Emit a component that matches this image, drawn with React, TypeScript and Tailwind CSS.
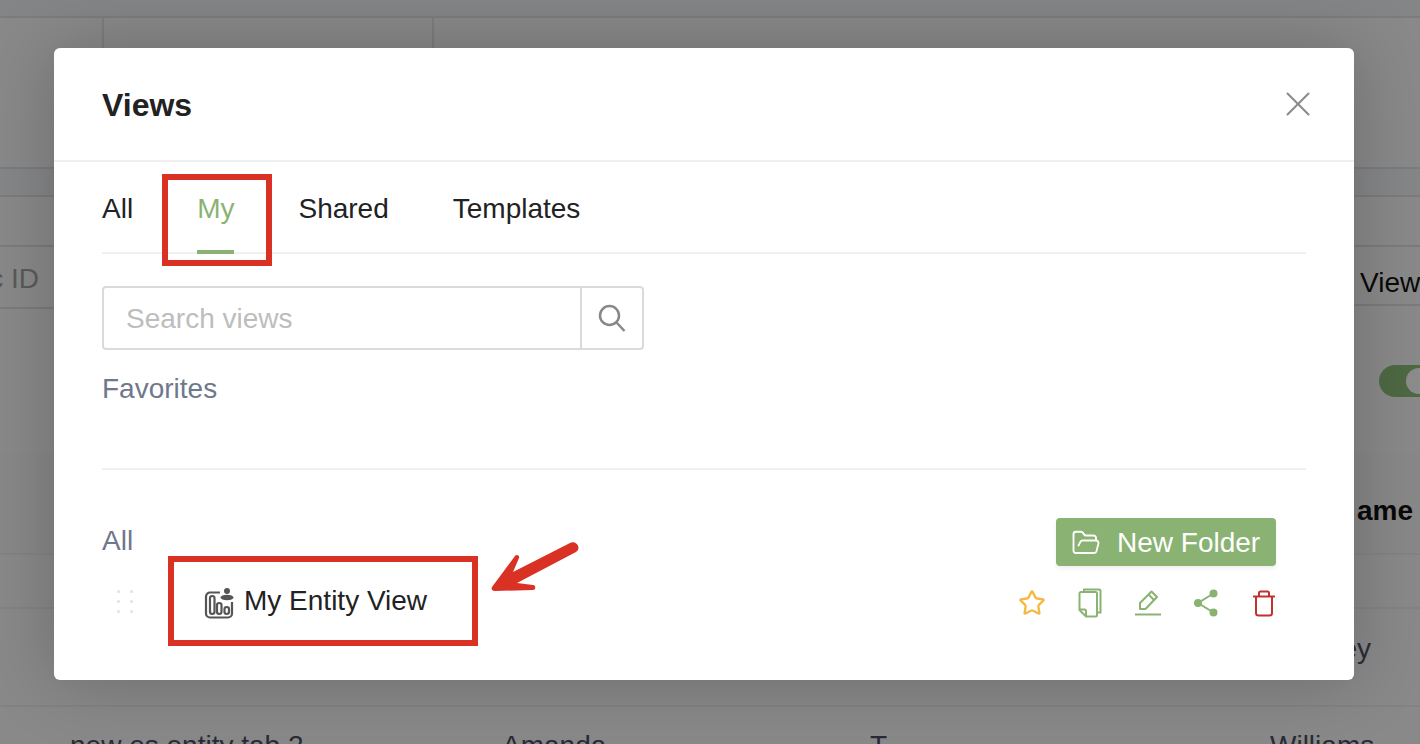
import { FolderOpen, Star, X } from "lucide-react";

const FONT = "font-['Liberation_Sans',Arial,sans-serif]";

function EntityIcon() {
  return (
    <svg width="30" height="32" viewBox="0 0 30 32" fill="none" stroke="#555" strokeWidth="2.200">
      <path d="M16 5.500H6A4 4 0 0 0 2 9.500v17a4 4 0 0 0 4 4h18a4 4 0 0 0 4-4V15" />
      <rect x="6" y="9" width="4.500" height="18" rx="2.200" />
      <rect x="13" y="16" width="4.500" height="11" rx="2.200" />
      <rect x="20.500" y="20" width="4.500" height="7" rx="2.200" />
      <circle cx="23" cy="4" r="3" fill="#555" stroke="none" />
      <ellipse cx="23" cy="10.500" rx="6.500" ry="2.800" fill="#555" stroke="none" />
    </svg>
  );
}

function CopyIcon() {
  return (
    <svg width="24" height="30" viewBox="0 0 24 30" fill="none" stroke="#8ab373" strokeWidth="2">
      <path d="M6 3.500V1.500h15a1.500 1.500 0 0 1 1.500 1.500v21.500h-3" />
      <path d="M3 4h14.500A1.500 1.500 0 0 1 19 5.500V27a1.500 1.500 0 0 1-1.500 1.500H8L1.500 22V5.500A1.500 1.500 0 0 1 3 4z" />
      <path d="M8 28v-5a1.500 1.500 0 0 0-1.500-1.500H2" />
    </svg>
  );
}

function PencilIcon() {
  return (
    <svg width="26" height="26" viewBox="0 0 26 26" fill="none" stroke="#8ab373" strokeWidth="2">
      <path d="M5 19v-6L16.500 1.500l5.500 5.500L10.500 19z" strokeLinejoin="round" />
      <path d="M13.500 4.500l5.500 5.500" />
      <path d="M0 24.500h26" />
    </svg>
  );
}

function ShareIcon() {
  return (
    <svg width="26" height="28" viewBox="0 0 26 28" fill="#8ab373" stroke="#8ab373" strokeWidth="2">
      <circle cx="20.500" cy="4.500" r="3" />
      <circle cx="20.500" cy="23.500" r="3" />
      <circle cx="5" cy="14" r="3" />
      <path d="M20.500 4.500L5 14l15.500 9.500" fill="none" />
    </svg>
  );
}

function TrashIcon() {
  return (
    <svg width="24" height="27" viewBox="0 0 24 27" fill="none" stroke="#c0322c" strokeWidth="2">
      <path d="M1 6.500h22" />
      <path d="M7 6V3a1.500 1.500 0 0 1 1.500-1.500h7A1.500 1.500 0 0 1 17 3v3" />
      <path d="M4 6.500V23a2.500 2.500 0 0 0 2.500 2.500h11A2.500 2.500 0 0 0 20 23V6.500" />
    </svg>
  );
}

function SearchIcon() {
  return (
    <svg width="28" height="28" viewBox="0 0 28 28" fill="none" stroke="#888" strokeWidth="2.500">
      <circle cx="11.500" cy="11.500" r="9.500" />
      <path d="M18.500 18.500l8 8.500" />
    </svg>
  );
}

function DragDots() {
  return (
    <div className="grid grid-cols-2 gap-x-[10px] gap-y-[7px]">
      {[0, 1, 2, 3, 4, 5].map((i) => (
        <span key={i} className="h-[3px] w-[3px] rounded-full bg-[#e2e2e2]" />
      ))}
    </div>
  );
}

// page behind the dimmed overlay
function Backdrop() {
  return (
    <div className="h-[744px] overflow-hidden bg-[#fafafa] text-[28px] text-[#4b5163]">
      <div className="h-[18px] border-b-2 border-[#e2e2e2] bg-[#f1f2f5]" />
      <div className="flex h-[151px] border-b-2 border-[#e2e2e2]">
        <div className="w-[104px] border-r-2 border-[#e4e4e4]" />
        <div className="w-[330px] border-r-2 border-[#e4e4e4]" />
      </div>
      <div className="h-[28px] border-b-2 border-[#e2e2e2] bg-[#f3f4f8]" />
      <div className="h-[50px] border-b-2 border-[#e0e0e0]" />
      <div className="flex h-[62px] items-start justify-between overflow-hidden">
        <div className="flex h-[62px] w-[54px] justify-end overflow-hidden border-b-2 border-[#e0e0e0] pt-[11px] pr-[15px] whitespace-nowrap">
          <span className="shrink-0 text-[#a5a5a5]">c ID</span>
        </div>
        <div className="h-[59px] w-[66px] overflow-hidden border-b-2 border-[#e0e0e0] pt-[15px] pl-[6px] whitespace-nowrap text-[#111]">
          View
        </div>
      </div>
      <div className="flex h-[144px] items-center justify-end">
        <div className="-mr-[16px] flex h-[32px] w-[57px] items-center justify-end rounded-full bg-[#8cc07a] pr-[4px]">
          <span className="h-[26px] w-[26px] rounded-full bg-white" />
        </div>
      </div>
      <div className="flex h-[102px] items-center justify-end border-b-2 border-[#efefef] bg-[#f8f8f8] pt-[16px]">
        <span className="mr-[7px] font-bold text-[#111]">ame</span>
      </div>
      <div className="h-[54px] border-b-2 border-[#efefef]" />
      <div className="flex h-[98px] items-center justify-end border-b-2 border-[#efefef] pb-[16px]">
        <span className="mr-[49px]">Bailey</span>
      </div>
      <div className="flex pt-[21px] leading-[36px] whitespace-nowrap">
        <span className="ml-[70px] w-[432px]">new es entity tab 2</span>
        <span className="w-[368px]">Amanda</span>
        <span className="w-[400px]">T</span>
        <span>Williams</span>
      </div>
    </div>
  );
}

export default function App() {
  return (
    <div className={`relative h-[744px] w-[1420px] overflow-hidden ${FONT}`}>
      <Backdrop />

      <div className="absolute inset-0 bg-black/45 pt-[48px] pl-[54px]">
        <div className="relative h-[632px] w-[1300px] rounded-[6px] bg-white text-[#222] shadow-[0_0_70px_rgba(0,0,0,0.22)]">
          <div className="flex h-[114px] items-center justify-between border-b-2 border-[#f0f0f0] pr-[35px] pl-12">
            <h2 className="pt-[2px] text-[32px] font-bold">Views</h2>
            <X size={42} strokeWidth={1.2} className="text-[#8c8c8c]" />
          </div>

          <div className="px-12">
            <div className="flex h-[92px] gap-[64px] border-b-2 border-[#f0f0f0] text-[28px]">
              <span className="pt-[26px]">All</span>
              <span className="h-[92px] border-b-4 border-[#8ab373] pt-[26px] text-[#8ab373]">My</span>
              <span className="pt-[26px]">Shared</span>
              <span className="pt-[26px]">Templates</span>
            </div>

            <div className="mt-[32px] flex h-[64px] w-[542px] rounded-[4px] border-2 border-[#dadada]">
              <input
                placeholder="Search views"
                className="min-w-0 flex-1 pt-[2px] pl-[22px] text-[28px] outline-none placeholder:text-[#bdbdbd]"
              />
              <div className="flex w-[62px] items-center justify-center border-l-2 border-[#dadada]">
                <SearchIcon />
              </div>
            </div>

            <div className="mt-[22px] h-[98px] border-b-2 border-[#f0f0f0] text-[28px] leading-[34px] text-[#6f788d]">
              Favorites
            </div>

            <div className="mt-[48px] flex items-start justify-between pr-[30px]">
              <span className="pt-[5px] text-[28px] leading-[36px] text-[#6f788d]">All</span>
              <button className="flex h-[48px] w-[220px] items-center gap-[16px] rounded-[4px] bg-[#8ab373] pt-[2px] pl-[15px] text-[28px] text-white shadow-[0_3px_4px_rgba(0,0,0,0.06)]">
                <FolderOpen size={30} strokeWidth={1.5} />
                New Folder
              </button>
            </div>

            <div className="mt-[2px] flex h-[66px] items-center justify-between pr-[28px]">
              <div className="flex items-center">
                <div className="ml-[15px]">
                  <DragDots />
                </div>
                <div className="mt-[4px] ml-[71px]">
                  <EntityIcon />
                </div>
                <span className="ml-[10px] text-[28px]">My Entity View</span>
              </div>
              <div className="mt-[4px] flex items-center">
                <Star size={28} strokeWidth={2} className="text-[#f5b942]" />
                <div className="ml-[30px] flex w-[28px] justify-center">
                  <CopyIcon />
                </div>
                <div className="ml-[30px] flex w-[28px] justify-center">
                  <PencilIcon />
                </div>
                <div className="ml-[30px] flex w-[28px] justify-center">
                  <ShareIcon />
                </div>
                <div className="ml-[30px] flex w-[28px] justify-center">
                  <TrashIcon />
                </div>
              </div>
            </div>
          </div>

          {/* annotations added on top of the screenshot */}
          <div className="absolute top-[126px] left-[108px] h-[92px] w-[110px] border-[6px] border-[#d93124]" />
          <div className="absolute top-[508px] left-[114px] h-[90px] w-[310px] border-[6px] border-[#d93124]" />
          <svg className="absolute top-[490px] left-[430px]" width="110" height="60" viewBox="0 0 110 60">
            <path d="M8 49L31 18c1-2 5-1 4 2L29 34 86 5c6-3 12 5 6 9L33 45l16 2c3 0 3 5 0 5L11 53c-3 0-4-2-3-4z" fill="#d93124" />
          </svg>
        </div>
      </div>
    </div>
  );
}
